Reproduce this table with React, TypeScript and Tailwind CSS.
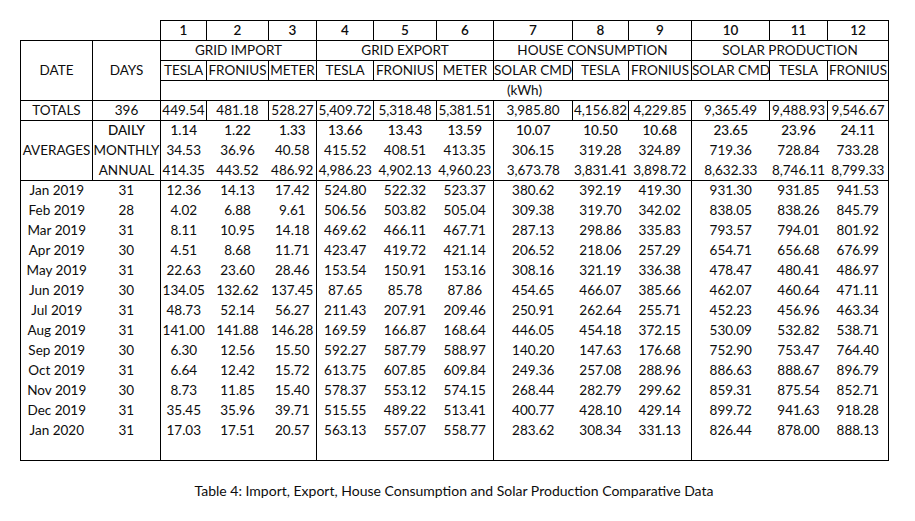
import React from "react";

const cols = [72, 68, 46, 62, 48, 57, 63, 57, 79, 56, 63, 78, 58, 61];

const totals = ["449.54", "481.18", "528.27", "5,409.72", "5,318.48", "5,381.51", "3,985.80", "4,156.82", "4,229.85", "9,365.49", "9,488.93", "9,546.67"];
const daily = ["1.14", "1.22", "1.33", "13.66", "13.43", "13.59", "10.07", "10.50", "10.68", "23.65", "23.96", "24.11"];
const monthly = ["34.53", "36.96", "40.58", "415.52", "408.51", "413.35", "306.15", "319.28", "324.89", "719.36", "728.84", "733.28"];
const annual = ["414.35", "443.52", "486.92", "4,986.23", "4,902.13", "4,960.23", "3,673.78", "3,831.41", "3,898.72", "8,632.33", "8,746.11", "8,799.33"];

const rows: [string, string, string[]][] = [
  ["Jan 2019", "31", ["12.36", "14.13", "17.42", "524.80", "522.32", "523.37", "380.62", "392.19", "419.30", "931.30", "931.85", "941.53"]],
  ["Feb 2019", "28", ["4.02", "6.88", "9.61", "506.56", "503.82", "505.04", "309.38", "319.70", "342.02", "838.05", "838.26", "845.79"]],
  ["Mar 2019", "31", ["8.11", "10.95", "14.18", "469.62", "466.11", "467.71", "287.13", "298.86", "335.83", "793.57", "794.01", "801.92"]],
  ["Apr 2019", "30", ["4.51", "8.68", "11.71", "423.47", "419.72", "421.14", "206.52", "218.06", "257.29", "654.71", "656.68", "676.99"]],
  ["May 2019", "31", ["22.63", "23.60", "28.46", "153.54", "150.91", "153.16", "308.16", "321.19", "336.38", "478.47", "480.41", "486.97"]],
  ["Jun 2019", "30", ["134.05", "132.62", "137.45", "87.65", "85.78", "87.86", "454.65", "466.07", "385.66", "462.07", "460.64", "471.11"]],
  ["Jul 2019", "31", ["48.73", "52.14", "56.27", "211.43", "207.91", "209.46", "250.91", "262.64", "255.71", "452.23", "456.96", "463.34"]],
  ["Aug 2019", "31", ["141.00", "141.88", "146.28", "169.59", "166.87", "168.64", "446.05", "454.18", "372.15", "530.09", "532.82", "538.71"]],
  ["Sep 2019", "30", ["6.30", "12.56", "15.50", "592.27", "587.79", "588.97", "140.20", "147.63", "176.68", "752.90", "753.47", "764.40"]],
  ["Oct 2019", "31", ["6.64", "12.42", "15.72", "613.75", "607.85", "609.84", "249.36", "257.08", "288.96", "886.63", "888.67", "896.79"]],
  ["Nov 2019", "30", ["8.73", "11.85", "15.40", "578.37", "553.12", "574.15", "268.44", "282.79", "299.62", "859.31", "875.54", "852.71"]],
  ["Dec 2019", "31", ["35.45", "35.96", "39.71", "515.55", "489.22", "513.41", "400.77", "428.10", "429.14", "899.72", "941.63", "918.28"]],
  ["Jan 2020", "31", ["17.03", "17.51", "20.57", "563.13", "557.07", "558.77", "283.62", "308.34", "331.13", "826.44", "878.00", "888.13"]],
];

const subs = ["TESLA", "FRONIUS", "METER", "TESLA", "FRONIUS", "METER", "SOLAR CMD", "TESLA", "FRONIUS", "SOLAR CMD", "TESLA", "FRONIUS"];
const groups = ["GRID IMPORT", "GRID EXPORT", "HOUSE CONSUMPTION", "SOLAR PRODUCTION"];

function dataCls(i: number, extra: string) {
  if (i === 11) return "border-l-0 border-r border-black p-0 " + extra;
  if (i === 0 || i === 3 || i === 6 || i === 9) return "border-l border-black p-0 " + extra;
  return "p-0 " + extra;
}

export default function App() {
  return (
    <div className="w-[915px] h-[521px] bg-white text-[#0d0d0d] font-['Lato',sans-serif] text-[13.5px] leading-[19px]">
      <div className="pl-[20px] pt-[20px]">
        <table className="table-fixed border-collapse text-center w-[868px]">
          <colgroup>
            {cols.map((w, i) => (
              <col key={i} style={{ width: w }} />
            ))}
          </colgroup>
          <tbody>
            <tr className="h-[20px]">
              <td colSpan={2} className="p-0"></td>
              {Array.from({ length: 12 }, (_, i) => (
                <td key={i} className="border border-black p-0 font-semibold">
                  {i + 1}
                </td>
              ))}
            </tr>
            <tr className="h-[20px]">
              <td rowSpan={3} className="border border-black p-0">DATE</td>
              <td rowSpan={3} className="border border-black p-0">DAYS</td>
              {groups.map((g) => (
                <td key={g} colSpan={3} className="border border-black p-0">
                  {g}
                </td>
              ))}
            </tr>
            <tr className="h-[20px]">
              {subs.map((s, i) => (
                <td key={i} className="border border-black p-0 whitespace-nowrap">
                  {s}
                </td>
              ))}
            </tr>
            <tr className="h-[20px]">
              <td colSpan={12} className="border border-black p-0">(kWh)</td>
            </tr>
            <tr className="h-[20px]">
              <td className="border border-black p-0">TOTALS</td>
              <td className="border border-black p-0">396</td>
              {totals.map((v, i) => (
                <td key={i} className="border border-black p-0 whitespace-nowrap">
                  {v}
                </td>
              ))}
            </tr>
            <tr className="h-[20px]">
              <td rowSpan={3} className="border border-black p-0">AVERAGES</td>
              <td className="border-l border-r border-black p-0 font-medium">DAILY</td>
              {daily.map((v, i) => (
                <td key={i} className={dataCls(i, "font-medium whitespace-nowrap")}>
                  {v}
                </td>
              ))}
            </tr>
            <tr className="h-[20px]">
              <td className="border-l border-r border-black p-0">MONTHLY</td>
              {monthly.map((v, i) => (
                <td key={i} className={dataCls(i, "whitespace-nowrap")}>
                  {v}
                </td>
              ))}
            </tr>
            <tr className="h-[20px]">
              <td className="border-l border-r border-black p-0">ANNUAL</td>
              {annual.map((v, i) => (
                <td key={i} className={dataCls(i, "whitespace-nowrap")}>
                  {v}
                </td>
              ))}
            </tr>
            {rows.map(([d, n, vals], r) => (
              <tr key={d} className={r === 0 ? "h-[20px] border-t border-black" : "h-[20px]"}>
                <td className="border-l border-black p-0 whitespace-nowrap">{d}</td>
                <td className="p-0">{n}</td>
                {vals.map((v, i) => (
                  <td key={i} className={dataCls(i, "whitespace-nowrap")}>
                    {v}
                  </td>
                ))}
              </tr>
            ))}
            <tr className="h-[20px] border-b border-black">
              <td className="border-l border-black p-0"></td>
              <td className="p-0"></td>
              {Array.from({ length: 12 }, (_, i) => (
                <td key={i} className={dataCls(i, "")}></td>
              ))}
            </tr>
          </tbody>
        </table>
        <div className="mt-[20px] w-[868px] text-center text-[14px] leading-[19px]">
          Table 4: Import, Export, House Consumption and Solar Production Comparative Data
        </div>
      </div>
    </div>
  );
}
